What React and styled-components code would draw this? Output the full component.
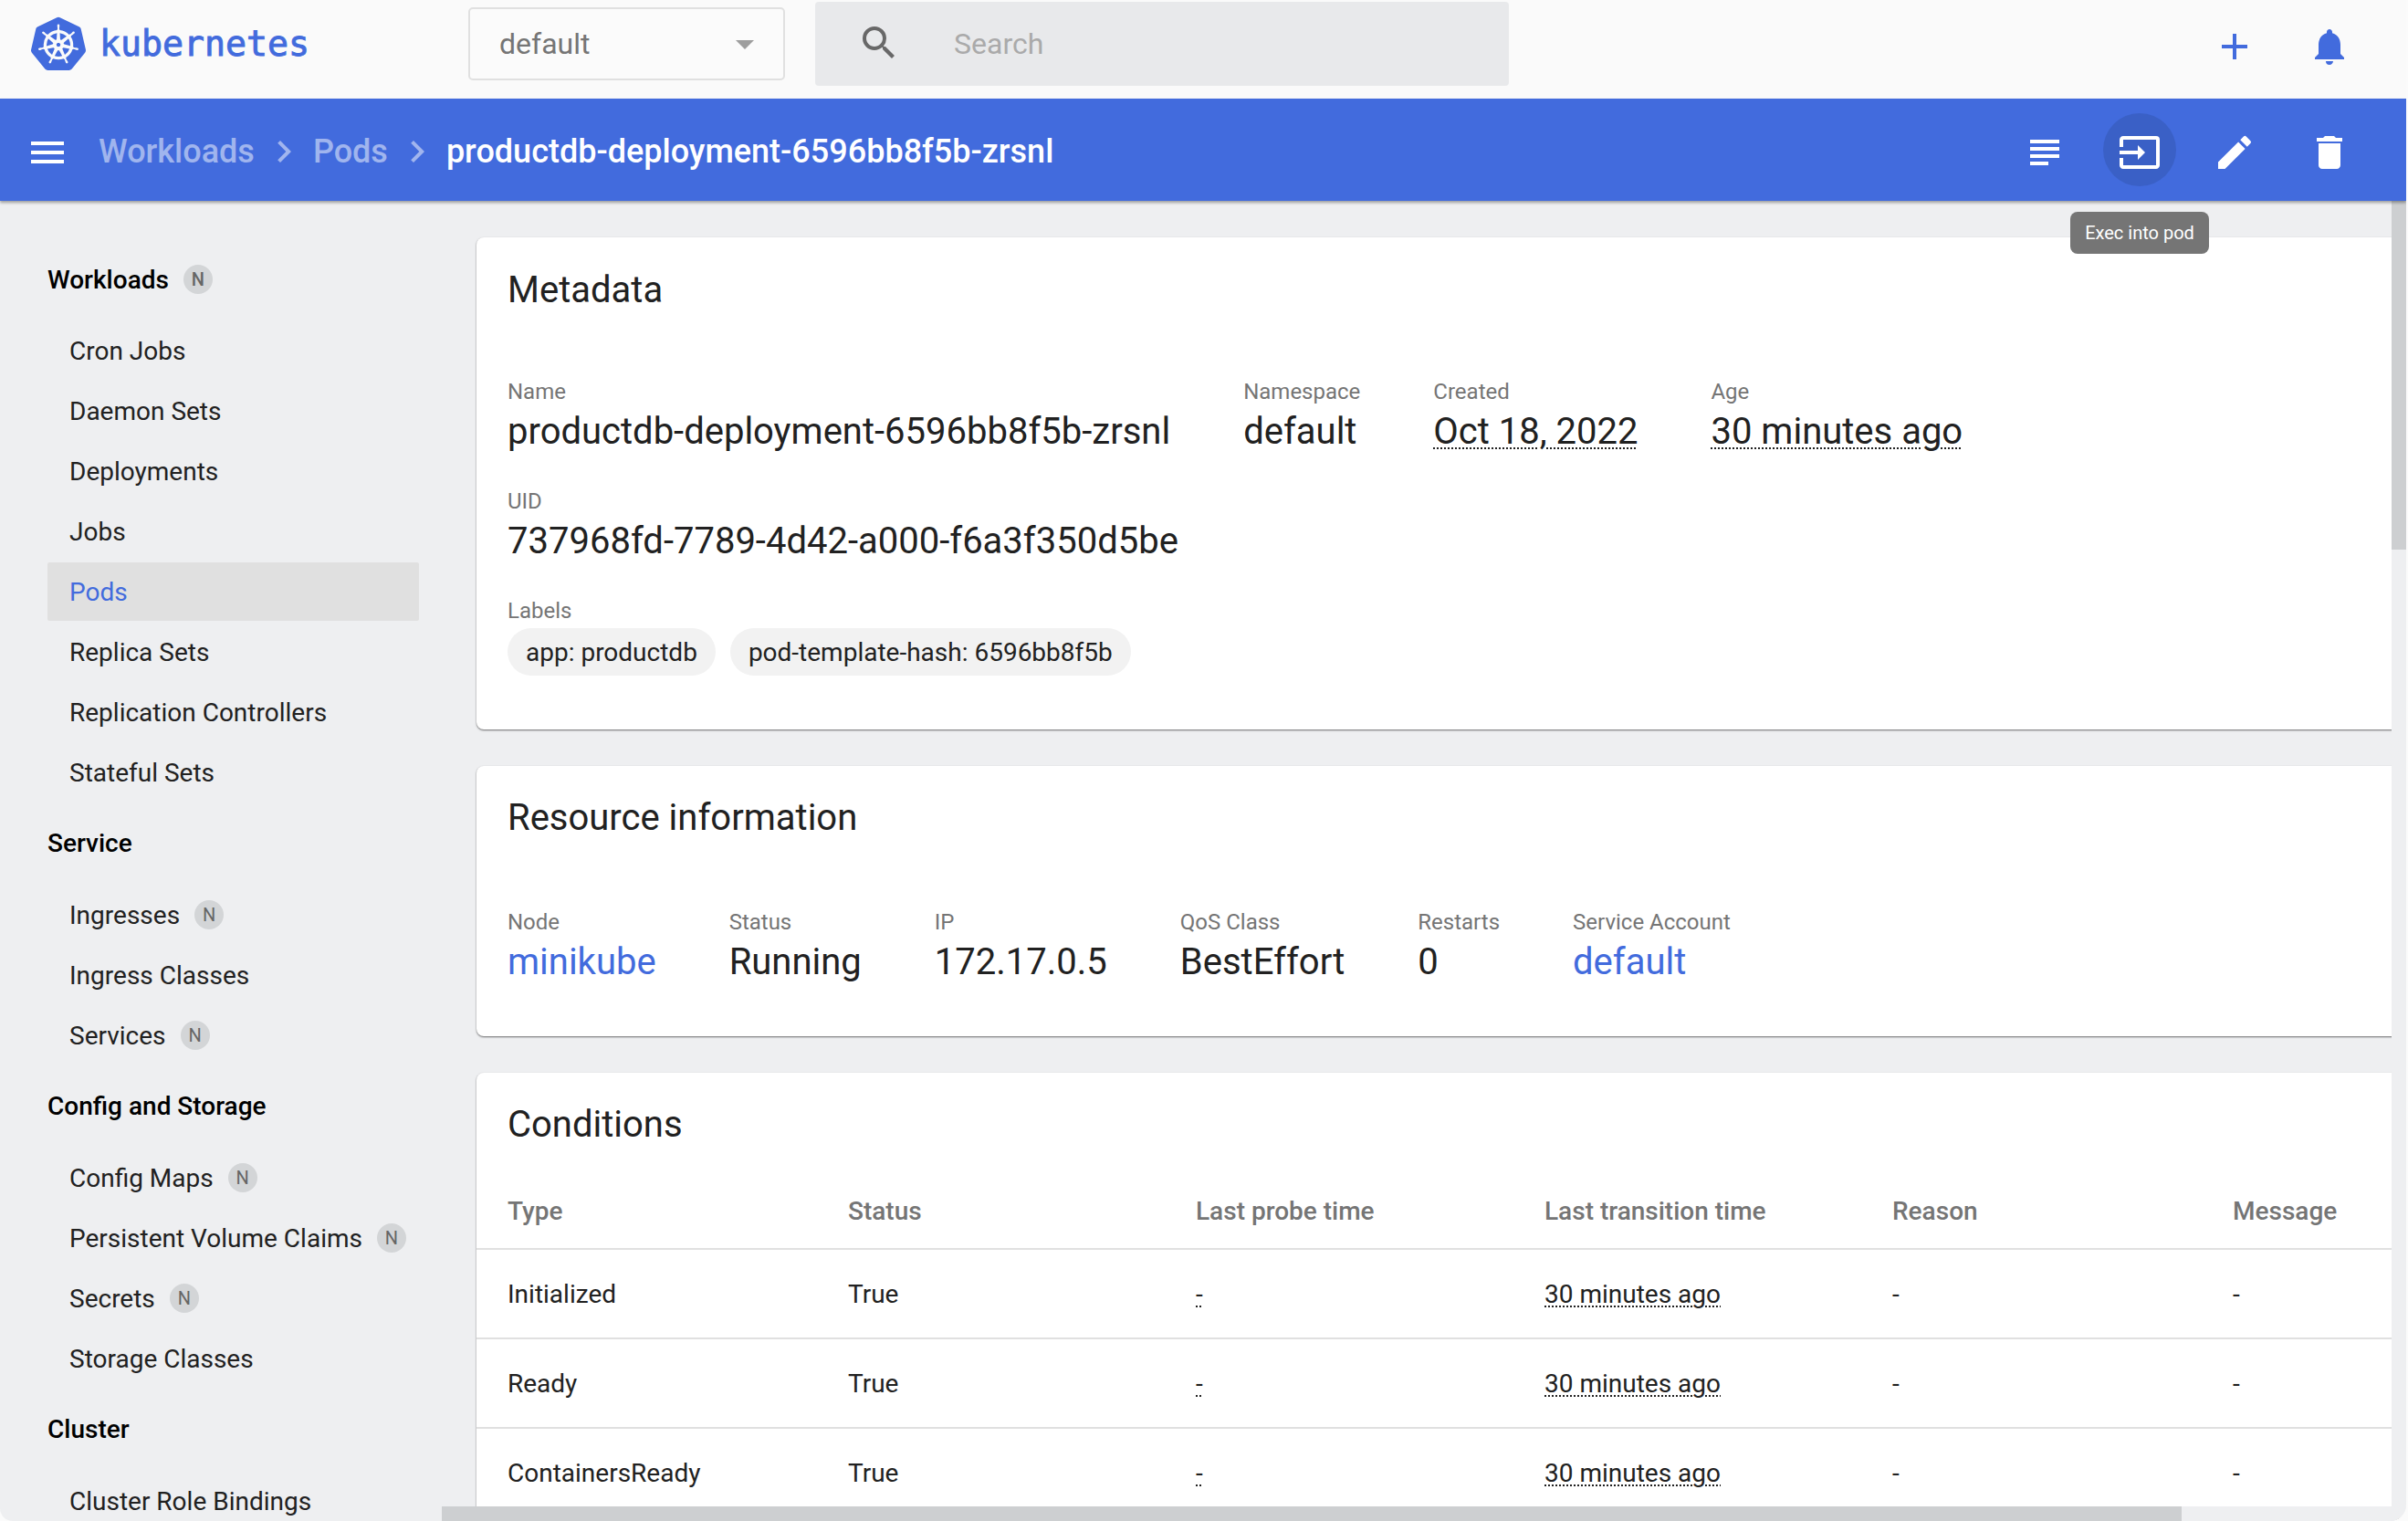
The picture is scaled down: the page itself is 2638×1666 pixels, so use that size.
import React from 'react';
import styled, { createGlobalStyle } from 'styled-components';
import { SiKubernetes } from 'react-icons/si';
import { MdMenu, MdChevronRight, MdSearch, MdAdd, MdNotifications, MdSubject, MdInput, MdEdit, MdDelete, MdArrowDropDown } from 'react-icons/md';

const Global = createGlobalStyle`
  html, body { margin: 0; padding: 0; height: 100%; overflow: hidden; background: #fbfbfb; }
  * { box-sizing: border-box; }
  body { font-family: Roboto, "Liberation Sans", sans-serif; color: #212121; }
`;

const blue = '#426bdd';

const Shell = styled.div`
  width: 2636px;
  height: 1666px;
  display: flex;
  flex-direction: column;
  background: #eeeff1;
  overflow: hidden;
  position: relative;
  border-radius: 0 0 18px 14px;
`;

const TopBar = styled.header`
  height: 108px;
  flex: none;
  background: #fafafa;
  display: flex;
  align-items: center;
  padding: 0 0 12px 34px;
  color: ${blue};
`;
const Brand = styled.div`
  width: 479px;
  display: flex;
  align-items: center;
  gap: 15px;
`;
const BrandName = styled.span`
  font-family: "DejaVu Sans Mono", monospace;
  font-weight: 400;
  font-size: 38.2px;
  -webkit-text-stroke: 0.9px ${blue};
  color: ${blue};
`;
const Select = styled.div`
  width: 347px;
  height: 80px;
  border: 2px solid #e0e0e0;
  border-radius: 5px;
  display: flex;
  align-items: center;
  justify-content: space-between;
  padding: 0 18px 0 32px;
  font-size: 32px;
  color: #757575;
  background: #fbfbfb;
  svg { color: #9e9e9e; flex: none; }
`;
const Search = styled.div`
  width: 760px;
  height: 92px;
  margin-left: 33px;
  background: #e8e9eb;
  border-radius: 4px;
  display: flex;
  align-items: center;
  padding-left: 46px;
  font-size: 32px;
  color: #aaaaaa;
  svg { color: #686868; flex: none; margin-right: 58px; margin-top: -2px; }
`;
const TopActions = styled.div`
  margin: 6px 0 0 auto;
  display: flex;
  align-items: center;
  gap: 56px;
  padding-right: 60px;
  color: ${blue};
  svg { display: block; }
`;

const ActionBar = styled.div`
  height: 112px;
  flex: none;
  background: ${blue};
  display: flex;
  align-items: center;
  padding: 4px 44px 0 28px;
  box-shadow: 0 2px 3px rgba(0,0,0,.35);
  position: relative;
  z-index: 2;
  color: #fff;
`;
const MenuIcon = styled(MdMenu)`
  flex: none;
  margin: 2px 32px 0 0;
`;
const Crumb = styled.span`
  font-size: 36px;
  font-weight: 500;
  color: rgba(255,255,255,.5);
`;
const Current = styled(Crumb)`
  color: #fff;
`;
const Sep = styled(MdChevronRight)`
  color: rgba(255,255,255,.5);
  margin: 0 8px;
  flex: none;
`;
const Actions = styled.div`
  margin: -4px 0 0 auto;
  display: flex;
  gap: 24px;
`;
const ActionButton = styled.div`
  width: 80px;
  height: 80px;
  border-radius: 50%;
  display: flex;
  align-items: center;
  justify-content: center;
  padding-top: 6px;
  background: ${p => (p.$hover ? '#3a60c6' : 'transparent')};
`;
const Tooltip = styled.div`
  position: absolute;
  top: 232px;
  left: 2268px;
  width: 152px;
  height: 46px;
  border-radius: 8px;
  background: #757575;
  color: #fff;
  font-size: 20px;
  display: flex;
  align-items: center;
  justify-content: center;
  z-index: 3;
`;

const Body = styled.div`
  flex: 1;
  min-height: 0;
  display: flex;
`;
const Side = styled.nav`
  width: 484px;
  flex: none;
  overflow: hidden;
  padding: 42px 25px 0 52px;
`;
const SideTitle = styled.div`
  height: 40px;
  margin: 24px 0 25px;
  display: flex;
  align-items: center;
  font-size: 28px;
  font-weight: 500;
  color: #000;
`;
const SideItem = styled.div`
  height: ${p => (p.$active ? '64px' : '66px')};
  margin: ${p => (p.$active ? '1px 0' : '0')};
  display: flex;
  align-items: center;
  padding-left: 24px;
  font-size: 28px;
  border-radius: 2px;
  color: ${p => (p.$active ? blue : '#212121')};
  background: ${p => (p.$active ? '#e0e0e0' : 'transparent')};
`;
const Group = styled.div`
  & + & { margin-top: 1px; }
  & + & ${SideTitle} { margin-bottom: 26px; }
`;
const Badge = styled.span`
  width: 32px;
  height: 32px;
  margin-left: 16px;
  border-radius: 50%;
  background: #d3d5d7;
  color: #666;
  font-size: 20px;
  display: flex;
  align-items: center;
  justify-content: center;
`;

const Main = styled.main`
  flex: 1;
  min-width: 0;
  overflow: hidden;
  position: relative;
`;
const VTrack = styled.div`
  position: absolute;
  top: 0;
  right: 0;
  bottom: 0;
  width: 16px;
  background: #eeeff1;
`;
const VThumb = styled.div`
  height: 382px;
  background: #cdcfd1;
`;
const HTrack = styled.div`
  position: absolute;
  left: 0;
  right: 0;
  bottom: 0;
  height: 16px;
  background: #eeeff1;
`;
const HThumb = styled.div`
  width: 1906px;
  height: 100%;
  background: #cdcfd1;
`;
const Content = styled.div`
  width: 2394px;
  padding: 40px 38px;
  display: flex;
  flex-direction: column;
  gap: 40px;
`;
const Card = styled.section`
  background: #fff;
  border-radius: 8px;
  box-shadow: 0 1px 2px rgba(0,0,0,.55);
  padding: ${p => p.$pad || '36px 34px 53px'};
`;
const CardTitle = styled.h2`
  margin: 0;
  padding-top: ${p => p.$nudge || 0};
  font-size: 40px;
  line-height: 40px;
  font-weight: 400;
  color: #212121;
`;
const Fields = styled.div`
  display: flex;
  gap: 80px;
  margin-top: ${p => p.$top || '32px'};
`;
const Label = styled.div`
  font-size: 24px;
  line-height: 32px;
  color: #757575;
`;
const Value = styled.div`
  font-size: 40px;
  line-height: 56px;
  color: ${p => (p.$link ? blue : '#212121')};
`;
const Dotted = styled.span`
  text-decoration: underline dotted;
  text-underline-offset: 4px;
  text-decoration-thickness: 2px;
`;
const Chips = styled.div`
  display: flex;
  gap: 16px;
  margin-top: 3px;
`;
const Chip = styled.span`
  height: 52px;
  border-radius: 26px;
  padding: 0 20px;
  background: #f2f2f2;
  font-size: 28px;
  display: flex;
  align-items: center;
`;
const Table = styled.table`
  border-collapse: collapse;
  table-layout: fixed;
  width: calc(100% + 68px);
  margin: 34px 0 0 -34px;
`;
const Th = styled.th`
  height: 82px;
  padding: 0 0 0 34px;
  text-align: left;
  font-size: 28px;
  font-weight: 500;
  color: #757575;
  border-bottom: 2px solid #e0e0e0;
`;
const Td = styled.td`
  height: 98px;
  padding: 0 0 0 34px;
  font-size: 28px;
  color: #212121;
  border-bottom: 2px solid #e0e0e0;
`;

const nav = [
  ['Workloads', true, [['Cron Jobs'], ['Daemon Sets'], ['Deployments'], ['Jobs'], ['Pods', false, true], ['Replica Sets'], ['Replication Controllers'], ['Stateful Sets']]],
  ['Service', false, [['Ingresses', true], ['Ingress Classes'], ['Services', true]]],
  ['Config and Storage', false, [['Config Maps', true], ['Persistent Volume Claims', true], ['Secrets', true], ['Storage Classes']]],
  ['Cluster', false, [['Cluster Role Bindings']]],
];

const columns = [
  ['Type', 373], ['Status', 381], ['Last probe time', 382], ['Last transition time', 381], ['Reason', 373], ['Message', 0],
];
const conditions = ['Initialized', 'Ready', 'ContainersReady'];

const Field = ({ label, children, link }) => (
  <div>
    <Label>{label}</Label>
    <Value $link={link}>{children}</Value>
  </div>
);

export default function App() {
  return (
    <Shell>
      <Global />
      <TopBar>
        <Brand>
          <SiKubernetes size={60} />
          <BrandName>kubernetes</BrandName>
        </Brand>
        <Select>default<MdArrowDropDown size={48} /></Select>
        <Search><MdSearch size={48} />Search</Search>
        <TopActions>
          <MdAdd size={48} />
          <MdNotifications size={48} />
        </TopActions>
      </TopBar>
      <ActionBar>
        <MenuIcon size={48} />
        <Crumb>Workloads</Crumb>
        <Sep size={48} />
        <Crumb>Pods</Crumb>
        <Sep size={48} />
        <Current>productdb-deployment-6596bb8f5b-zrsnl</Current>
        <Actions>
          <ActionButton><MdSubject size={48} /></ActionButton>
          <ActionButton $hover><MdInput size={48} /></ActionButton>
          <ActionButton><MdEdit size={48} /></ActionButton>
          <ActionButton><MdDelete size={48} /></ActionButton>
        </Actions>
      </ActionBar>
      <Tooltip>Exec into pod</Tooltip>
      <Body>
        <Side>
          {nav.map(([title, badge, items]) => (
            <Group key={title}>
              <SideTitle>{title}{badge && <Badge>N</Badge>}</SideTitle>
              {items.map(([name, n, active]) => (
                <SideItem key={name} $active={active}>{name}{n && <Badge>N</Badge>}</SideItem>
              ))}
            </Group>
          ))}
        </Side>
        <Main>
          <Content>
            <Card $pad="36px 34px 59px">
              <CardTitle $nudge="2px">Metadata</CardTitle>
              <Fields $top="75px">
                <Field label="Name">productdb-deployment-6596bb8f5b-zrsnl</Field>
                <Field label="Namespace">default</Field>
                <Field label="Created"><Dotted>Oct 18, 2022</Dotted></Field>
                <Field label="Age"><Dotted>30 minutes ago</Dotted></Field>
              </Fields>
              <Fields>
                <Field label="UID">737968fd-7789-4d42-a000-f6a3f350d5be</Field>
              </Fields>
              <Fields>
                <div>
                  <Label>Labels</Label>
                  <Chips>
                    <Chip>app: productdb</Chip>
                    <Chip>pod-template-hash: 6596bb8f5b</Chip>
                  </Chips>
                </div>
              </Fields>
            </Card>
            <Card>
              <CardTitle $nudge="1px">Resource information</CardTitle>
              <Fields $top="78px">
                <Field label="Node" link>minikube</Field>
                <Field label="Status">Running</Field>
                <Field label="IP">172.17.0.5</Field>
                <Field label="QoS Class">BestEffort</Field>
                <Field label="Restarts">0</Field>
                <Field label="Service Account" link>default</Field>
              </Fields>
            </Card>
            <Card $pad="36px 34px 0">
              <CardTitle $nudge="1px">Conditions</CardTitle>
              <Table>
                <colgroup>
                  {columns.map(([name, w]) => <col key={name} style={w ? { width: w } : undefined} />)}
                </colgroup>
                <thead>
                  <tr>{columns.map(([name]) => <Th key={name}>{name}</Th>)}</tr>
                </thead>
                <tbody>
                  {conditions.map(type => (
                    <tr key={type}>
                      <Td>{type}</Td>
                      <Td>True</Td>
                      <Td><Dotted>-</Dotted></Td>
                      <Td><Dotted>30 minutes ago</Dotted></Td>
                      <Td>-</Td>
                      <Td>-</Td>
                    </tr>
                  ))}
                </tbody>
              </Table>
            </Card>
          </Content>
          <VTrack><VThumb /></VTrack>
          <HTrack><HThumb /></HTrack>
        </Main>
      </Body>
    </Shell>
  );
}
